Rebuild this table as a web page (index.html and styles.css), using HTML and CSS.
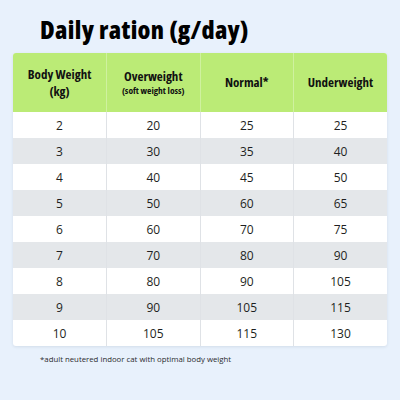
FILE: index.html
```html
<!DOCTYPE html>
<html lang="en">
<head>
  <meta charset="UTF-8" />
  <title>Daily ration</title>
  <link rel="stylesheet" href="styles.css">
</head>
<body>
  <div class="page">
    <h1 class="title">Daily ration (g/day)</h1>
    <table class="ration">
      <thead>
        <tr>
          <th>Body Weight<br>(kg)</th>
          <th>Overweight<span class="sub">(soft weight loss)</span></th>
          <th>Normal*</th>
          <th>Underweight</th>
        </tr>
      </thead>
      <tbody>
        <tr><td>2</td><td>20</td><td>25</td><td>25</td></tr>
        <tr><td>3</td><td>30</td><td>35</td><td>40</td></tr>
        <tr><td>4</td><td>40</td><td>45</td><td>50</td></tr>
        <tr><td>5</td><td>50</td><td>60</td><td>65</td></tr>
        <tr><td>6</td><td>60</td><td>70</td><td>75</td></tr>
        <tr><td>7</td><td>70</td><td>80</td><td>90</td></tr>
        <tr><td>8</td><td>80</td><td>90</td><td>105</td></tr>
        <tr><td>9</td><td>90</td><td>105</td><td>115</td></tr>
        <tr><td>10</td><td>105</td><td>115</td><td>130</td></tr>
      </tbody>
    </table>
    <p class="note">*adult neutered indoor cat with optimal body weight</p>
  </div>
</body>
</html>
```
FILE: styles.css
```css
html, body {
  margin: 0; padding: 0;
  background: #e8f1fc;
  font-family: "Open Sans", "Noto Sans", sans-serif;
  color: #1e1f22;
}
.page {
  width: 400px; height: 400px;
  box-sizing: border-box;
  padding: 11px 13px 0 13px;
}
.title {
  margin: 0 0 0 27px;
  font-size: 25px;
  line-height: 36px;
  height: 42px;
  font-weight: 800;
  font-stretch: 75%;
  letter-spacing: 0.35px;
  color: #000;
}
.ration {
  width: 374px;
  border-collapse: collapse;
  table-layout: fixed;
  background: #fff;
  border-radius: 3px;
  overflow: hidden;
  box-shadow: 0 1px 3px rgba(60, 80, 110, 0.12);
}
.ration th {
  background: #bbeb76;
  height: 59px;
  padding: 0 4px;
  font-size: 13px;
  line-height: 17px;
  font-weight: 700;
  font-stretch: 75%;
  color: #111;
  border-left: 1px solid rgba(255, 255, 255, 0.3);
}
.ration th .sub {
  display: block;
  font-size: 9.5px;
  line-height: 12px;
}
.ration td {
  height: 26px;
  padding: 0;
  text-align: center;
  font-size: 12px;
  color: #1e1f22;
  border-left: 1px solid #dfe2e6;
}
.ration th:first-child, .ration td:first-child { border-left: none; }
.ration tbody tr:nth-child(even) td { background: #e4e7ea; }
.note {
  margin: 8px 0 0 27px;
  font-size: 7.8px;
  color: #2a2b2e;
}
```
